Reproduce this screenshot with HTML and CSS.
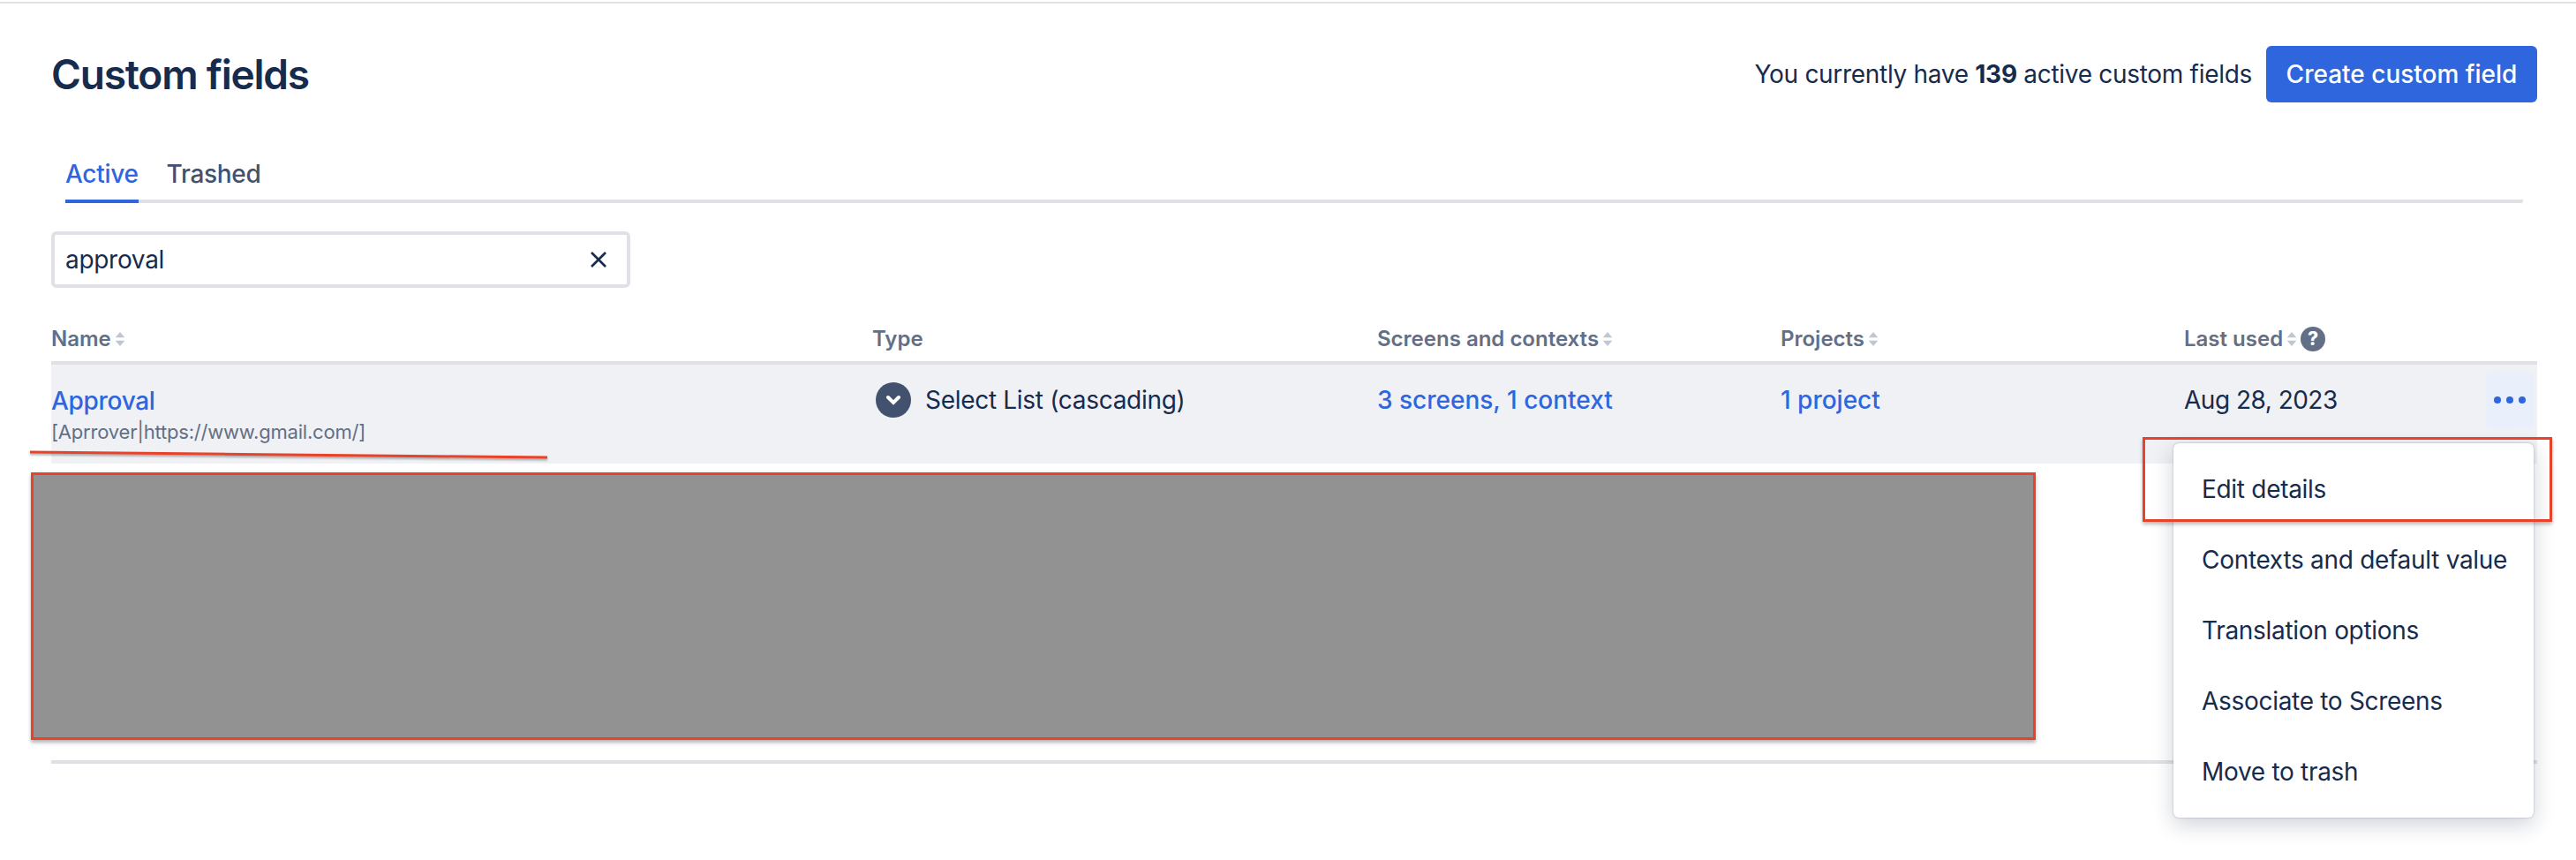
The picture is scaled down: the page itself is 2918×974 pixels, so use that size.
FILE: index.html
```html
<!DOCTYPE html>
<html lang="en">
<head>
  <meta charset="UTF-8">
  <title>Custom fields</title>
  <link rel="stylesheet" href="styles.css">
</head>
<body>

  <div class="top-line"></div>

  <div class="page">
    <div class="page-header">
      <h1>Custom fields</h1>
      <div class="header-actions">
        <span class="field-count">You currently have <b>139</b> active custom fields</span>
        <button class="create-btn">Create custom field</button>
      </div>
    </div>

    <div class="tabs">
      <div class="tab active">Active</div>
      <div class="tab">Trashed</div>
    </div>

    <div class="search-box">
      <span>approval</span>
      <svg class="clear-icon" viewBox="0 0 20 20"><path d="M2 2L18 18M18 2L2 18"/></svg>
    </div>

    <div class="table-row table-head">
      <div class="head-cell">Name<svg class="sort" viewBox="0 0 12 18"><path d="M6 0L12 7H0ZM6 18L0 11H12Z"/></svg></div>
      <div class="head-cell">Type</div>
      <div class="head-cell">Screens and contexts<svg class="sort" viewBox="0 0 12 18"><path d="M6 0L12 7H0ZM6 18L0 11H12Z"/></svg></div>
      <div class="head-cell">Projects<svg class="sort" viewBox="0 0 12 18"><path d="M6 0L12 7H0ZM6 18L0 11H12Z"/></svg></div>
      <div class="head-cell">Last used<svg class="sort" viewBox="0 0 12 18"><path d="M6 0L12 7H0ZM6 18L0 11H12Z"/></svg><span class="help">?</span></div>
    </div>

    <div class="table-row field-row">
      <div class="name-cell">
        <a class="link name-link">Approval</a>
        <div class="field-desc">[Aprrover|https://www.gmail.com/]</div>
      </div>
      <div class="type-cell">
        <span class="type-icon"><svg viewBox="0 0 40 40"><path d="M14 17L20 23L26 17"/></svg></span>
        Select List (cascading)
      </div>
      <div class="cell"><a class="link">3 screens, 1 context</a></div>
      <div class="cell"><a class="link">1 project</a></div>
      <div class="cell date-cell">Aug 28, 2023</div>
      <div class="more-btn"><i></i><i></i><i></i></div>
    </div>

    <div class="redacted"></div>
    <div class="table-end"></div>
  </div>

  <div class="menu">
    <div class="menu-item">Edit details</div>
    <div class="menu-item">Contexts and default value</div>
    <div class="menu-item">Translation options</div>
    <div class="menu-item">Associate to Screens</div>
    <div class="menu-item">Move to trash</div>
  </div>

  <div class="mark-box"></div>
  <svg class="mark-line" viewBox="0 0 600 16"><path d="M2 3L588 9"/></svg>

</body>
</html>
```

FILE: styles.css
```css
body {
  margin: 0;
  background: #fff;
  color: #172b4d;
  font-family: Inter, "Liberation Sans", sans-serif;
  font-size: 28px;
  letter-spacing: -0.3px;
  position: relative;
  min-height: 974px;
  overflow: hidden;
}

.top-line {
  height: 2px;
  margin-top: 2px;
  background: #dfe1e6;
}

.page {
  padding: 0 44px 0 58px;
}

.page-header {
  display: flex;
  justify-content: space-between;
  align-items: center;
  padding-top: 48px;
}

h1 {
  margin: 0;
  font-size: 46px;
  font-weight: 600;
  letter-spacing: -1.2px;
}

.header-actions {
  display: flex;
  align-items: center;
  gap: 16px;
}

.field-count b {
  font-weight: 700;
}

.create-btn {
  height: 64px;
  width: 307px;
  padding: 0;
  border: none;
  border-radius: 6px;
  background: #2f66dd;
  color: #fff;
  font-family: inherit;
  font-size: 28px;
  font-weight: 500;
}

.tabs {
  display: flex;
  gap: 32px;
  margin: 64px 16px 0;
  border-bottom: 4px solid #dfe1e6;
  border-radius: 2px;
}

.tab {
  color: #42526e;
  font-weight: 500;
  padding-bottom: 12px;
  line-height: 34px;
  margin-bottom: -4px;
  border-bottom: 4px solid transparent;
}

.tab.active {
  color: #2f66dd;
  border-bottom-color: #2f66dd;
}

.search-box {
  display: flex;
  justify-content: space-between;
  align-items: center;
  box-sizing: border-box;
  width: 656px;
  height: 64px;
  margin-top: 32px;
  padding: 0 22px 0 12px;
  border: 4px solid #dfe1e6;
  border-radius: 6px;
}

.clear-icon {
  width: 20px;
  height: 20px;
  fill: none;
  stroke: #172b4d;
  stroke-width: 2.6;
}

.table-row {
  display: grid;
  grid-template-columns: 930px 572px 457px 457px 1fr;
}

.table-head {
  margin-top: 36px;
  padding-bottom: 9px;
  border-bottom: 4px solid #dfe1e6;
  height: 38px;
  align-items: end;
}

.head-cell {
  display: flex;
  align-items: center;
  color: #626f86;
  font-size: 24px;
  font-weight: 600;
  letter-spacing: 0;
  line-height: 32px;
}

.sort {
  width: 12px;
  height: 16px;
  margin-left: 4px;
  fill: #c1c7d0;
}

.help {
  width: 28px;
  height: 28px;
  margin-left: 4px;
  border-radius: 50%;
  background: #626f86;
  color: #fff;
  font-size: 21px;
  font-weight: 800;
  line-height: 28px;
  text-align: center;
}

.field-row {
  position: relative;
  height: 112px;
  background: #f0f1f4;
  line-height: 34px;
}

.link {
  color: #2f66dd;
  font-weight: 500;
  letter-spacing: 0;
}

.name-link {
  letter-spacing: -0.3px;
}

.name-cell {
  padding-top: 24px;
}

.field-desc {
  color: #626f86;
  font-size: 22px;
  letter-spacing: -0.2px;
  line-height: 30px;
  margin-top: 3px;
}

.type-cell {
  display: flex;
  align-items: center;
  gap: 16px;
  align-self: start;
  padding: 20px 0 0 4px;
}

.type-icon {
  width: 40px;
  height: 40px;
  border-radius: 50%;
  background: #42526e;
}

.type-icon svg {
  display: block;
  fill: none;
  stroke: #fff;
  stroke-width: 4;
  stroke-linecap: round;
}

.cell {
  padding-top: 23px;
}

.date-cell {
  letter-spacing: -0.5px;
}

.more-btn {
  position: absolute;
  top: 8px;
  right: 4px;
  display: flex;
  justify-content: center;
  align-items: center;
  gap: 6px;
  width: 54px;
  height: 64px;
  border-radius: 6px;
  background: #e9f0fc;
}

.more-btn i {
  width: 8px;
  height: 8px;
  border-radius: 50%;
  background: #2f66dd;
}

.redacted {
  box-sizing: border-box;
  width: 2271px;
  height: 303px;
  margin: 10px 0 0 -23px;
  border: 3px solid #e8432a;
  background: #929292;
  box-shadow: 0 3px 4px rgba(0, 0, 0, 0.3);
}

.table-end {
  height: 4px;
  margin-top: 23px;
  background: #dfe1e6;
}

.menu {
  position: absolute;
  top: 502px;
  left: 2462px;
  box-sizing: border-box;
  width: 408px;
  height: 424px;
  padding: 12px 0;
  border-radius: 6px;
  background: #fff;
  box-shadow: 0 8px 24px rgba(9, 30, 66, 0.2), 0 0 2px rgba(9, 30, 66, 0.35);
}

.menu-item {
  padding-left: 32px;
  line-height: 80px;
}

.mark-box {
  position: absolute;
  top: 495px;
  left: 2427px;
  box-sizing: border-box;
  width: 464px;
  height: 96px;
  border: 3px solid #e8432a;
  box-shadow: 0 3px 4px rgba(0, 0, 0, 0.25);
}

.mark-line {
  position: absolute;
  top: 509px;
  left: 32px;
  width: 600px;
  height: 16px;
  fill: none;
  stroke: #e8432a;
  stroke-width: 3;
  filter: drop-shadow(0 2px 1px rgba(0, 0, 0, 0.3));
}
```
